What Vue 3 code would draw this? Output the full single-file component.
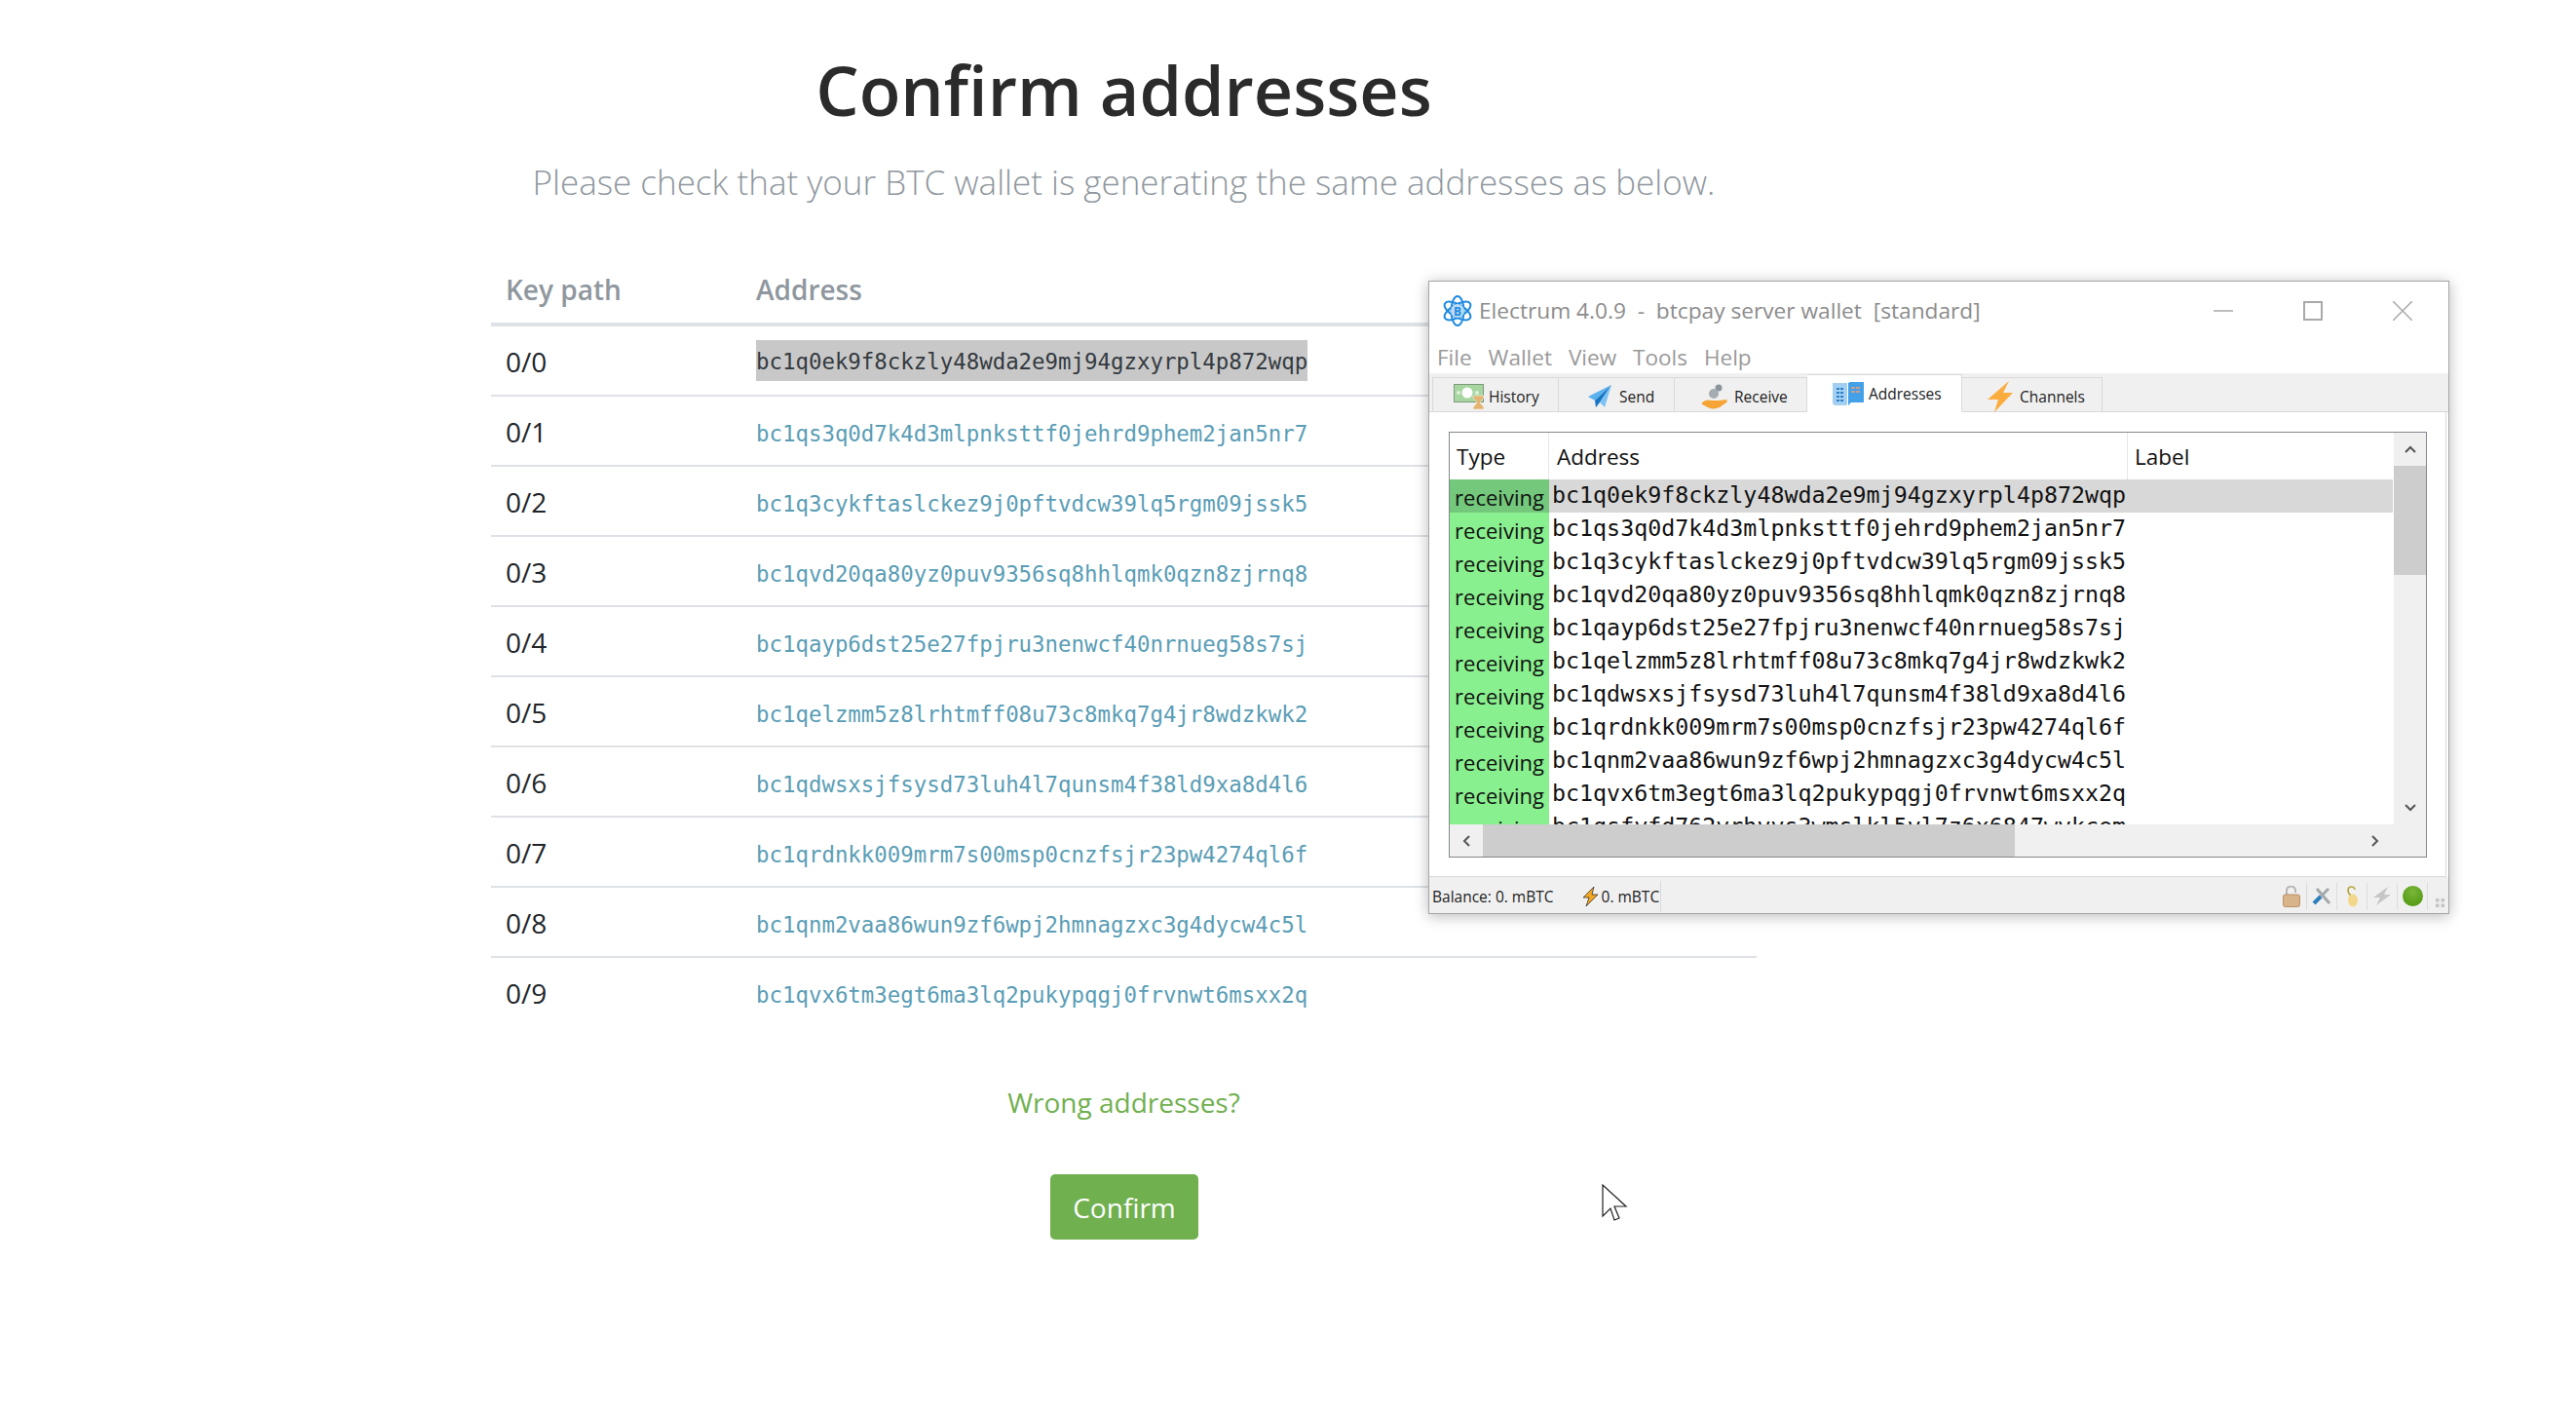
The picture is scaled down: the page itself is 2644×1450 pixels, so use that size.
<template>
  <div class="page">
    <h1 class="title">Confirm addresses</h1>
    <p class="lead">Please check that your BTC wallet is generating the same addresses as below.</p>

    <table class="addr-table">
      <thead>
        <tr>
          <th class="path-col">Key path</th>
          <th>Address</th>
        </tr>
      </thead>
      <tbody>
        <tr v-for="(addr, i) in addresses" :key="addr">
          <td>0/{{ i }}</td>
          <td class="addr-cell">
            <a class="addr" :class="{ selected: i === 0 }">{{ addr }}</a>
          </td>
        </tr>
      </tbody>
    </table>

    <a class="wrong">Wrong addresses?</a>
    <button class="confirm">Confirm</button>

    <div class="wallet">
      <div class="titlebar">
        <svg class="logo" viewBox="0 0 32 32" fill="none" stroke="#1f8ae0" stroke-width="2">
          <ellipse cx="16" cy="16" rx="15" ry="6.5" transform="rotate(30 16 16)" />
          <ellipse cx="16" cy="16" rx="15" ry="6.5" transform="rotate(90 16 16)" />
          <ellipse cx="16" cy="16" rx="15" ry="6.5" transform="rotate(150 16 16)" />
          <circle cx="16" cy="16" r="7" fill="#bcdcf6" stroke="none" />
          <text x="16" y="20.5" class="logo-b">B</text>
        </svg>
        <span class="win-title">Electrum 4.0.9&nbsp; - &nbsp;btcpay server wallet&nbsp; [standard]</span>
        <div class="win-controls">
          <svg width="20" height="20" viewBox="0 0 20 20"><path d="M0 10h20" stroke="#a9a9a9" stroke-width="1.5" /></svg>
          <svg width="20" height="20" viewBox="0 0 20 20"><rect x="1" y="1" width="18" height="18" fill="none" stroke="#a9a9a9" stroke-width="2" /></svg>
          <svg width="20" height="20" viewBox="0 0 20 20"><path d="M0 0l20 20M20 0L0 20" stroke="#a9a9a9" stroke-width="1.5" /></svg>
        </div>
      </div>

      <div class="menubar">
        <span v-for="m in menus" :key="m">{{ m }}</span>
      </div>

      <div class="tabbar">
        <div class="tab tab-history">
          <svg width="32" height="26" viewBox="0 0 32 26">
            <rect x="0.5" y="0.5" width="30" height="18" fill="#a8d6a0" stroke="#7d9a7a" />
            <circle cx="14" cy="9" r="5.5" fill="#fff" />
            <circle cx="5" cy="9" r="2" fill="#dff0db" />
            <circle cx="24" cy="9" r="2" fill="#dff0db" />
            <path d="M20 12h11v2l-4 5 4 5v2H20v-2l4-5-4-5z" fill="#e3b36f" stroke="#fff" stroke-width="0.5" />
          </svg>
          History
        </div>
        <div class="tab tab-send">
          <svg width="24" height="24" viewBox="0 0 24 24">
            <path d="M24 0L0 12l7 4z" fill="#5bb1ee" />
            <path d="M24 0L7 16l1 7 4-5z" fill="#1976c4" />
            <path d="M24 0L12 18l5 5z" fill="#7cc3f3" />
          </svg>
          Send
        </div>
        <div class="tab tab-receive">
          <svg width="26" height="26" viewBox="0 0 26 26">
            <circle cx="17" cy="4" r="3.5" fill="#8a949b" />
            <circle cx="12" cy="10" r="5" fill="#a5adb3" />
            <path d="M0 19c4-3 7-3 10-2h8l7-1c1 1 1 2 0 3l-7 5c-5 2-10 2-14-1l-4-2z" fill="#f6a535" />
          </svg>
          Receive
        </div>
        <div class="tab tab-addresses active">
          <svg width="32" height="24" viewBox="0 0 32 24">
            <path d="M0 1h15v22l-1 1H2l-2-2z" fill="#a3d0f2" />
            <path d="M16 24V1l2-1h14v21H19z" fill="#44a1e8" />
            <path d="M4 7h8M4 11h8M4 15h8M4 19h8" stroke="#2c7fc8" stroke-width="2" stroke-dasharray="3 1" />
            <path d="M19 6h10M19 10h10" stroke="#c79f8e" stroke-width="2" stroke-dasharray="4 1" />
          </svg>
          Addresses
        </div>
        <div class="tab tab-channels">
          <svg width="26" height="32" viewBox="0 0 26 32">
            <path d="M22 0L0 19h11L7 32l19-20H16z" fill="#fbac3e" />
          </svg>
          Channels
        </div>
      </div>

      <div class="panel">
        <div class="frame">
          <div class="list-wrap">
            <div class="list">
              <div class="list-head">
                <div class="col-type">Type</div>
                <div class="col-addr">Address</div>
                <div class="col-label">Label</div>
              </div>
              <div class="list-rows">
                <div v-for="(row, i) in walletRows" :key="row" class="list-row" :class="{ current: i === 0 }">
                  <div class="col-type cell-type">receiving</div>
                  <div class="cell-addr">{{ row }}</div>
                </div>
              </div>
            </div>
            <div class="vscroll">
              <div class="vbtn">
                <svg width="12" height="8" viewBox="0 0 12 8"><path d="M1 7l5-5 5 5" fill="none" stroke="#555" stroke-width="2" /></svg>
              </div>
              <div class="vthumb"></div>
              <div class="vtrack"></div>
              <div class="vbtn">
                <svg width="12" height="8" viewBox="0 0 12 8"><path d="M1 1l5 5 5-5" fill="none" stroke="#555" stroke-width="2" /></svg>
              </div>
            </div>
          </div>
          <div class="hscroll">
            <div class="hbtn">
              <svg width="8" height="12" viewBox="0 0 8 12"><path d="M7 1L2 6l5 5" fill="none" stroke="#555" stroke-width="2" /></svg>
            </div>
            <div class="hthumb"></div>
            <div class="htrack"></div>
            <div class="hbtn right">
              <svg width="8" height="12" viewBox="0 0 8 12"><path d="M1 1l5 5-5 5" fill="none" stroke="#555" stroke-width="2" /></svg>
            </div>
          </div>
        </div>
      </div>

      <div class="statusbar">
        <span class="balance">Balance: 0. mBTC</span>
        <svg width="17" height="20" viewBox="0 0 17 20"><path d="M12 0L1 11h6L4 20l12-12h-6z" fill="#f5a623" stroke="#333" stroke-width="0.8" /></svg>
        <span class="ln-balance">0. mBTC</span>
        <div class="status-icons">
          <div class="status-cell">
            <svg width="18" height="22" viewBox="0 0 18 22">
              <path d="M4 10V5a4.5 4.5 0 0 1 9 0v2" fill="none" stroke="#b5b5b5" stroke-width="2" />
              <rect x="0.5" y="9" width="17" height="12.5" rx="2" fill="#d9b48a" stroke="#b89468" />
            </svg>
          </div>
          <div class="status-cell">
            <svg width="20" height="19" viewBox="0 0 20 19">
              <path d="M5 2l13 15" stroke="#a4a9ad" stroke-width="3" />
              <path d="M17 2L9 10" stroke="#a4a9ad" stroke-width="3" />
              <path d="M9 10l-7 7" stroke="#2f7fbd" stroke-width="4" />
            </svg>
          </div>
          <div class="status-cell">
            <svg width="13" height="22" viewBox="0 0 13 22">
              <path d="M5 10C1 7 1 1 5 1c3 0 4 1 4 3" fill="none" stroke="#b5a842" stroke-width="1.6" />
              <ellipse cx="7" cy="15" rx="5" ry="6.5" fill="#f3d78b" />
            </svg>
          </div>
          <div class="status-cell">
            <svg width="18" height="19" viewBox="0 0 18 19"><path d="M15 0L0 11h7L3 19l15-11h-7z" fill="#c6c6c6" /></svg>
          </div>
          <div class="status-cell">
            <svg width="21" height="21" viewBox="0 0 21 21">
              <defs>
                <radialGradient id="dot" cx="50%" cy="30%" r="70%">
                  <stop offset="0" stop-color="#79b63a" />
                  <stop offset="1" stop-color="#549a14" />
                </radialGradient>
              </defs>
              <circle cx="10.5" cy="10.5" r="10.5" fill="url(#dot)" />
            </svg>
          </div>
        </div>
        <svg class="grip" width="9" height="9" viewBox="0 0 9 9" fill="#c4c4c4">
          <rect width="3.5" height="3.5" /><rect x="5.5" width="3.5" height="3.5" />
          <rect y="5.5" width="3.5" height="3.5" /><rect x="5.5" y="5.5" width="3.5" height="3.5" />
        </svg>
      </div>
    </div>

    <svg class="cursor" width="27" height="39" viewBox="0 0 27 39">
      <path d="M1 1v32l8-8 4 12 5-2-5-12h12z" fill="#fff" stroke="#222" stroke-width="1.2" />
    </svg>
  </div>
</template>

<script setup>
const addresses = [
  'bc1q0ek9f8ckzly48wda2e9mj94gzxyrpl4p872wqp',
  'bc1qs3q0d7k4d3mlpnksttf0jehrd9phem2jan5nr7',
  'bc1q3cykftaslckez9j0pftvdcw39lq5rgm09jssk5',
  'bc1qvd20qa80yz0puv9356sq8hhlqmk0qzn8zjrnq8',
  'bc1qayp6dst25e27fpjru3nenwcf40nrnueg58s7sj',
  'bc1qelzmm5z8lrhtmff08u73c8mkq7g4jr8wdzkwk2',
  'bc1qdwsxsjfsysd73luh4l7qunsm4f38ld9xa8d4l6',
  'bc1qrdnkk009mrm7s00msp0cnzfsjr23pw4274ql6f',
  'bc1qnm2vaa86wun9zf6wpj2hmnagzxc3g4dycw4c5l',
  'bc1qvx6tm3egt6ma3lq2pukypqgj0frvnwt6msxx2q'
]

const walletRows = [...addresses, 'bc1qsfyfd762vrhvvs3wmslkl5vl7z6x6847wvkcem']

const menus = ['File', 'Wallet', 'View', 'Tools', 'Help']
</script>

<style>
body {
  background: #fff;
}
</style>

<style scoped>
.page {
  position: relative;
  width: 2644px;
  height: 1450px;
  box-sizing: border-box;
  padding: 48px 0 0 504px;
  overflow: hidden;
  display: flex;
  flex-direction: column;
  align-items: flex-start;
  font-family: "Open Sans", sans-serif;
  color: #212529;
}

.title {
  width: 1299px;
  margin: 0;
  font-size: 70px;
  line-height: 88px;
  font-weight: 600;
  color: #2b2b2b;
  text-align: center;
}

.lead {
  width: 1299px;
  margin: 27px 0 0;
  font-size: 35px;
  line-height: 48px;
  font-weight: 300;
  color: #8f979e;
  text-align: center;
}

.addr-table {
  width: 1299px;
  margin-top: 51px;
  table-layout: fixed;
  border-collapse: collapse;
  font-size: 28px;
}

.addr-table th {
  height: 69px;
  padding: 0 0 0 15px;
  font-weight: 600;
  text-align: left;
  color: #8f979e;
  border-bottom: 4px solid #dee2e6;
}

.addr-table .path-col {
  width: 242px;
}

.addr-table td {
  height: 69px;
  padding: 1px 0 0 15px;
  border-bottom: 2px solid #dee2e6;
}

.addr-table tbody tr:last-child td {
  border-bottom: 0;
}

.addr-table td.addr-cell {
  height: 65px;
  padding-top: 5px;
  font-family: "DejaVu Sans Mono", monospace;
  font-size: 22.4px;
}

.addr {
  color: #5a9db5;
}

.addr.selected {
  display: inline-block;
  margin-top: -5px;
  padding-top: 3px;
  line-height: 39px;
  background: #c8c8c8;
  color: #343a40;
}

.wrong {
  width: 1299px;
  margin-top: 59px;
  font-size: 28px;
  line-height: 38px;
  color: #70b04f;
  text-align: center;
}

.confirm {
  width: 152px;
  height: 67px;
  margin: 55px 0 0 574px;
  padding: 0;
  border: 0;
  border-radius: 5px;
  background: #70b04f;
  color: #fff;
  font-family: inherit;
  font-size: 28px;
}

.wallet {
  position: absolute;
  left: 1466px;
  top: 288px;
  width: 1048px;
  height: 650px;
  box-sizing: border-box;
  display: flex;
  flex-direction: column;
  background: #fff;
  border: 1px solid #a5a5a5;
  box-shadow: 0 2px 14px rgba(0, 0, 0, 0.28);
  font-family: "Open Sans", sans-serif;
  color: #111;
}

.titlebar {
  height: 59px;
  flex: none;
  display: flex;
  align-items: center;
  padding: 0 37px 0 13px;
}

.logo {
  width: 32px;
  height: 32px;
}

.logo-b {
  font-size: 12px;
  font-weight: 700;
  fill: #1f8ae0;
  stroke: none;
  text-anchor: middle;
}

.win-title {
  margin-left: 6px;
  font-size: 22.7px;
  color: #8c8c8c;
  white-space: pre;
}

.win-controls {
  margin-left: auto;
  display: flex;
  gap: 72px;
}

.menubar {
  height: 35px;
  flex: none;
  padding-top: 1px;
  box-sizing: border-box;
  display: flex;
  align-items: center;
  gap: 17px;
  padding-left: 8px;
  font-size: 22.5px;
  color: #9a9a9a;
}

.tabbar {
  height: 40px;
  flex: none;
  display: flex;
  align-items: flex-end;
  padding-left: 3px;
  background: #f0f0f0;
  border-bottom: 1px solid #d9d9d9;
  box-sizing: border-box;
  font-size: 15.5px;
  color: #222;
}

.tab {
  height: 36px;
  margin-bottom: -1px;
  padding-top: 3px;
  box-sizing: border-box;
  display: flex;
  align-items: center;
  border: 1px solid #d9d9d9;
  border-left-width: 0;
  background: #f0f0f0;
}

.tab svg {
  flex: none;
}

.tab-history {
  width: 130px;
  padding-left: 21px;
  gap: 4px;
  border-left-width: 1px;
}

.tab-send {
  width: 119px;
  padding-left: 30px;
  gap: 8px;
}

.tab-receive {
  width: 136px;
  padding-left: 28px;
  gap: 7px;
}

.tab-addresses {
  width: 159px;
  padding-left: 26px;
  gap: 5px;
}

.tab-channels {
  width: 144px;
  padding-left: 26px;
  gap: 7px;
}

.tab.active {
  height: 39px;
  padding-bottom: 3px;
  background: #fff;
  border-color: #d9d9d9;
  border-bottom-color: #fff;
}

.panel {
  flex: 1;
  min-height: 0;
  margin-right: 2px;
  padding: 20px 19px 19px 20px;
  border-right: 1px solid #d9d9d9;
  border-bottom: 1px solid #d9d9d9;
  background: #fff;
}

.frame {
  height: 100%;
  box-sizing: border-box;
  display: flex;
  flex-direction: column;
  border: 1px solid #82878c;
}

.list-wrap {
  flex: 1;
  display: flex;
  min-height: 0;
}

.list {
  flex: 1;
  min-width: 0;
  overflow: hidden;
}

.list-head {
  height: 48px;
  display: flex;
  font-size: 22.5px;
}

.list-head > div {
  display: flex;
  align-items: center;
  padding-left: 7px;
  padding-top: 1px;
  box-sizing: border-box;
  border-right: 1px solid #e6e6e6;
}

.col-type {
  width: 102px;
  flex: none;
}

.list-head .col-addr {
  width: 594px;
  flex: none;
  padding-left: 8px;
}

.list-head .col-label {
  flex: 1;
  border-right: 0;
}

.list-row {
  height: 34px;
  display: flex;
  align-items: center;
}

.list-row.current {
  background: #d8d8d8;
}

.cell-type {
  height: 34px;
  padding-top: 3px;
  box-sizing: border-box;
  background: #89f08f;
  font-size: 22px;
  line-height: 30px;
  text-align: center;
}

.current .cell-type {
  background: #74c87c;
}

.cell-addr {
  padding-left: 3px;
  padding-bottom: 4px;
  font-family: "DejaVu Sans Mono", monospace;
  font-size: 23.3px;
  white-space: nowrap;
}

.vscroll {
  width: 33px;
  flex: none;
  margin-left: 1px;
  display: flex;
  flex-direction: column;
  background: #f0f0f0;
}

.vbtn {
  height: 34px;
  flex: none;
  display: flex;
  align-items: center;
  justify-content: center;
}

.vthumb {
  height: 112px;
  flex: none;
  background: #cdcdcd;
}

.vtrack,
.htrack {
  flex: 1;
}

.hscroll {
  height: 33px;
  flex: none;
  display: flex;
  background: #f0f0f0;
}

.hbtn {
  width: 34px;
  flex: none;
  display: flex;
  align-items: center;
  justify-content: center;
}

.hbtn.right {
  width: 76px;
  padding-right: 28px;
  box-sizing: border-box;
}

.hthumb {
  width: 546px;
  flex: none;
  background: #cdcdcd;
}

.statusbar {
  height: 37px;
  flex: none;
  padding-top: 2px;
  box-sizing: border-box;
  display: flex;
  align-items: center;
  padding-left: 3px;
  background: #f0f0f0;
  font-size: 15.5px;
  color: #222;
}

.balance {
  margin-right: 29px;
}

.ln-balance {
  margin-left: 3px;
  padding-right: 1px;
  border-right: 1px solid #d9d9d9;
  line-height: 32px;
}

.status-icons {
  margin-left: auto;
  display: flex;
  align-items: center;
}

.status-cell {
  width: 30px;
  height: 28px;
  display: flex;
  align-items: center;
  justify-content: center;
  border-right: 1px solid #dcdcdc;
}

.grip {
  margin: 14px 4px 0 8px;
}

.cursor {
  position: absolute;
  left: 1644px;
  top: 1215px;
}
</style>
